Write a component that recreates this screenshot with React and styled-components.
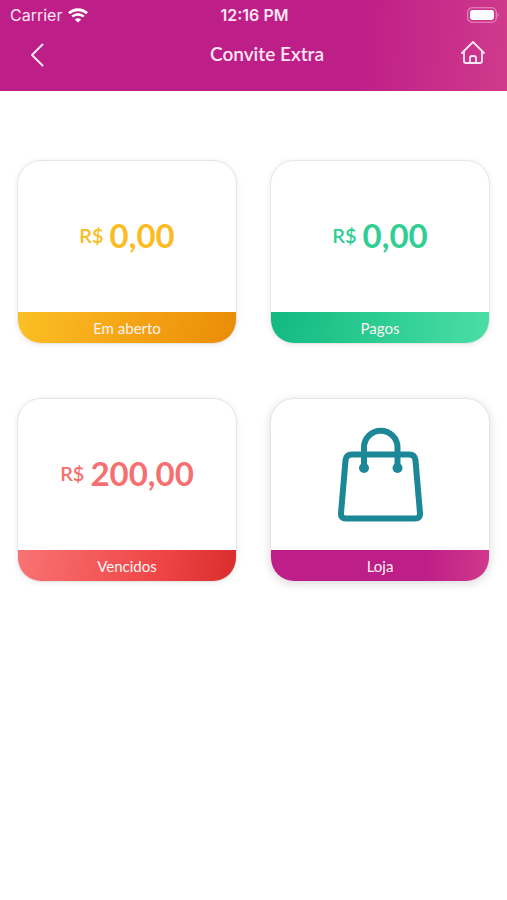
import styled, { createGlobalStyle } from "styled-components";

const GlobalStyle = createGlobalStyle`
  *, *::before, *::after {
    box-sizing: border-box;
  }
  body {
    margin: 0;
    background-color: #ffffff;
    font-family: Lato, "Open Sans", sans-serif;
  }
`;

const brandGradient =
  "linear-gradient(95deg, #be1e87 0%, #be1e87 70%, #d03a8c 100%)";

const Header = styled.header`
  display: flex;
  flex-direction: column;
  height: 91px;
  color: #fbe6f3;
  background: ${brandGradient};
`;

const StatusBar = styled.div`
  display: grid;
  grid-template-columns: 1fr auto 1fr;
  align-items: center;
  height: 30px;
  padding: 0 8px 0 10px;
  font-family: Inter, sans-serif;
  font-size: 16px;
  line-height: 20px;
`;

const Carrier = styled.span`
  display: flex;
  align-items: center;
  gap: 6px;
`;

const Clock = styled.span`
  font-weight: 600;
`;

const Battery = styled.svg`
  justify-self: end;
`;

const NavBar = styled.nav`
  display: grid;
  grid-template-columns: 1fr auto 1fr;
  align-items: center;
  height: 50px;
  padding: 0 21px 0 24px;
`;

const Title = styled.h1`
  margin: 0;
  padding: 0 0 2px 24px;
  font-size: 19px;
  font-weight: 600;
  line-height: 24px;
`;

const IconButton = styled.button`
  display: flex;
  justify-self: ${(props) => props.$side};
  padding: 0;
  border: 0;
  color: inherit;
  background: none;
  cursor: pointer;
`;

const Cards = styled.main`
  display: grid;
  grid-template-columns: 1fr 1fr;
  gap: 54px 33px;
  padding: 69px 17px;
`;

const CardButton = styled.button`
  display: flex;
  flex-direction: column;
  height: 184px;
  padding: 0;
  border: 1px solid #e6e6e6;
  border-radius: 24px;
  overflow: hidden;
  font-family: inherit;
  background-color: #ffffff;
  box-shadow: ${(props) =>
    props.$raised
      ? "0 2px 10px rgba(0, 0, 0, 0.14)"
      : "0 1px 6px rgba(0, 0, 0, 0.08)"};
  cursor: pointer;
`;

const CardBody = styled.span`
  display: flex;
  flex: 1;
  align-items: center;
  justify-content: center;
  width: 100%;
  color: ${(props) => props.$color};
`;

const Total = styled.span`
  display: flex;
  align-items: center;
  gap: 6px;
  padding-bottom: 4px;
`;

const Currency = styled.span`
  font-size: 20px;
  font-weight: 600;
  line-height: 24px;
`;

const Amount = styled.span`
  font-size: 33px;
  font-weight: 700;
  line-height: 40px;
`;

const CardLabel = styled.span`
  width: 100%;
  height: 31px;
  font-size: 15px;
  line-height: 33px;
  text-align: center;
  color: #fff3f3;
  background: ${(props) => props.$background};
`;

function WifiIcon() {
  return (
    <svg width="20" height="15" viewBox="0 0 20 15" fill="none" aria-hidden="true">
      <path d="M1 5.2C6 .6 14 .6 19 5.2" stroke="#fff" strokeWidth="2.8" />
      <path d="M4.2 8.6c3.4-3 8.2-3 11.6 0" stroke="#fff" strokeWidth="2.6" />
      <path d="M10 14.6 6.8 11.4c1.8-1.6 4.6-1.6 6.4 0z" fill="#fff" />
    </svg>
  );
}

function BatteryIcon() {
  return (
    <Battery width="32" height="16" viewBox="0 0 32 16" fill="none" role="img" aria-label="Battery">
      <rect x=".7" y=".7" width="28.6" height="14.6" rx="4.5" stroke="#e58fc1" strokeWidth="1.1" />
      <rect x="3" y="3" width="24" height="10" rx="2.4" fill="#fff" />
      <path d="M30.600 5.600c1.400.7 1.400 4.100 0 4.800z" fill="#e58fc1" />
    </Battery>
  );
}

function BackIcon() {
  return (
    <svg width="26" height="26" viewBox="0 0 26 26" fill="none" aria-hidden="true">
      <path
        d="M18.5 2.5 8 13l10.5 10.5"
        stroke="currentColor"
        strokeWidth="2"
        strokeLinecap="round"
        strokeLinejoin="round"
      />
    </svg>
  );
}

function HomeIcon() {
  return (
    <svg width="26" height="30" viewBox="0 0 26 30" fill="none" aria-hidden="true">
      <g stroke="currentColor" strokeWidth="1.8" strokeLinecap="round" strokeLinejoin="round">
        <path d="M2 13 13 2l11 11" />
        <path d="M4 11.5V21q0 2 2 2h14q2 0 2-2v-9.500" />
        <path d="M10 23v-5q0-2 2-2h2q2 0 2 2v5" />
      </g>
    </svg>
  );
}

function BagIcon() {
  return (
    <svg width="88" height="95" viewBox="0 0 88 95" fill="none" aria-hidden="true">
      <g stroke="#1b8797" strokeWidth="6">
        <path d="M16 27.5h57q6 0 6.500 6L84 86q.5 5.500-5 5.500H10q-5.500 0-5-5.500L9.500 33.500q.5-6 6.500-6z" />
        <path d="M28 41V20.500a16.750 16.750 0 0 1 33.500 0V41" />
      </g>
      <circle cx="28" cy="41" r="5" fill="#1b8797" />
      <circle cx="61.500" cy="41" r="5" fill="#1b8797" />
    </svg>
  );
}

const totals = [
  {
    label: "Em aberto",
    amount: "0,00",
    color: "#fbbc22",
    background: "linear-gradient(100deg, #fbbf24, #f3a012 60%, #ea8c06)",
  },
  {
    label: "Pagos",
    amount: "0,00",
    color: "#2fce93",
    background: "linear-gradient(100deg, #12b981, #2fcf95 55%, #4cdda6)",
  },
  {
    label: "Vencidos",
    amount: "200,00",
    color: "#f66f70",
    background: "linear-gradient(100deg, #f97373, #ef4546 65%, #d92d2d)",
  },
];

export default function App() {
  return (
    <>
      <GlobalStyle />
      <Header>
        <StatusBar>
          <Carrier>
            Carrier
            <WifiIcon />
          </Carrier>
          <Clock>12:16 PM</Clock>
          <BatteryIcon />
        </StatusBar>
        <NavBar>
          <IconButton type="button" $side="start" aria-label="Voltar">
            <BackIcon />
          </IconButton>
          <Title>Convite Extra</Title>
          <IconButton type="button" $side="end" aria-label="Início">
            <HomeIcon />
          </IconButton>
        </NavBar>
      </Header>
      <Cards>
        {totals.map((total) => (
          <CardButton type="button" key={total.label}>
            <CardBody $color={total.color}>
              <Total>
                <Currency>R$</Currency>
                <Amount>{total.amount}</Amount>
              </Total>
            </CardBody>
            <CardLabel $background={total.background}>{total.label}</CardLabel>
          </CardButton>
        ))}
        <CardButton type="button" $raised>
          <CardBody>
            <BagIcon />
          </CardBody>
          <CardLabel $background={brandGradient}>Loja</CardLabel>
        </CardButton>
      </Cards>
    </>
  );
}
